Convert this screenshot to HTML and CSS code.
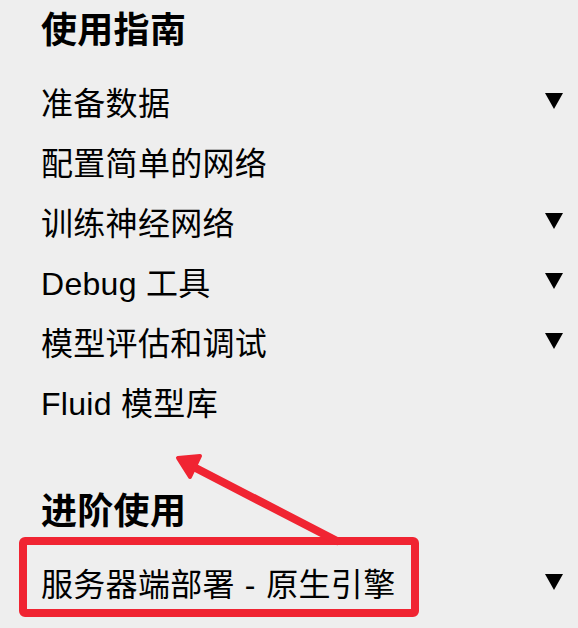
FILE: index.html
```html
<!DOCTYPE html>
<html lang="zh-CN">
<head>
<meta charset="utf-8">
<link rel="stylesheet" href="styles.css">
</head>
<body>
<div class="page">
  <nav class="menu">
    <h2 class="section-title">使用指南</h2>
    <ul class="items">
      <li class="item"><span>准备数据</span><i class="caret"></i></li>
      <li class="item"><span>配置简单的网络</span></li>
      <li class="item"><span>训练神经网络</span><i class="caret"></i></li>
      <li class="item"><span>Debug 工具</span><i class="caret"></i></li>
      <li class="item"><span>模型评估和调试</span><i class="caret"></i></li>
      <li class="item"><span>Fluid 模型库</span></li>
    </ul>
    <h2 class="section-title second">进阶使用</h2>
    <ul class="items">
      <li class="item"><span>服务器端部署<span class="sep"> - </span>原生引擎</span><i class="caret"></i></li>
    </ul>
  </nav>
  <svg class="annotation" width="578" height="628" viewBox="0 0 578 628">
    <rect x="23" y="541" width="392" height="72" rx="2" fill="none" stroke="#f02432" stroke-width="8"/>
    <line x1="337" y1="541" x2="186" y2="463" stroke="#f02432" stroke-width="8" stroke-linecap="round"/>
    <polygon points="178,458 200,456 190,477" fill="#f02432" stroke="#f02432" stroke-width="4" stroke-linejoin="round"/>
  </svg>
</div>
</body>
</html>
```
FILE: styles.css
```css
html, body {
  margin: 0;
  padding: 0;
  background: #eeeeee;
}
.page {
  position: relative;
  width: 578px;
  height: 628px;
  overflow: hidden;
  font-family: "Liberation Sans", "Noto Sans CJK SC", sans-serif;
  color: #000;
}
.menu {
  padding: 0 15px 0 41px;
}
.section-title {
  margin: 0;
  height: 62px;
  line-height: 62px;
  font-size: 36px;
  font-weight: bold;
  letter-spacing: 0.3px;
}
.section-title.second {
  margin-top: 49px;
}
.items {
  list-style: none;
  margin: 10px 0 0 0;
  padding: 0;
}
.item {
  display: flex;
  align-items: center;
  justify-content: space-between;
  box-sizing: border-box;
  height: 60px;
  padding-bottom: 3px;
  font-size: 32px;
  letter-spacing: 0.3px;
}
.sep {
  letter-spacing: 1px;
}
.caret {
  width: 0;
  height: 0;
  margin-top: 1px;
  border-left: 9.5px solid transparent;
  border-right: 9.5px solid transparent;
  border-top: 16px solid #000;
}
.annotation {
  position: absolute;
  left: 0;
  top: 0;
  pointer-events: none;
}
```
